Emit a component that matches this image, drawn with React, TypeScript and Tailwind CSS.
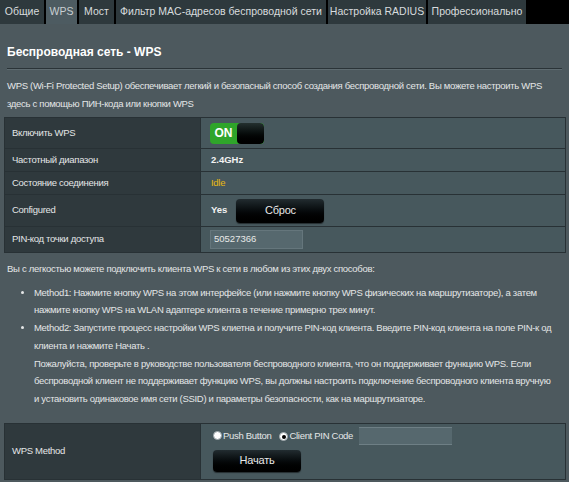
import React from 'react';

const tabs = [
  { label: 'Общие', w: 'w-[44px]' },
  { label: 'WPS', w: 'w-[31px]', active: true },
  { label: 'Мост', w: 'w-[35px]' },
  { label: 'Фильтр MAC-адресов беспроводной сети', w: 'w-[210px]' },
  { label: 'Настройка RADIUS', w: 'w-[98px]' },
  { label: 'Профессионально', w: 'w-[98px]' },
];

const BlackButton: React.FC<{ label: string; className?: string }> = ({ label, className }) => (
  <button
    className={`flex items-center justify-center rounded-[4px] bg-gradient-to-b from-[#222c30] to-[#000000] text-[11px] tracking-[-0.2px] text-[#e8e8e8] shadow-[0_1px_1px_rgba(0,0,0,0.5)] ${className ?? ''}`}
  >
    {label}
  </button>
);

const Radio: React.FC<{ checked?: boolean }> = ({ checked }) => (
  <span className="relative inline-flex h-[9px] w-[9px] items-center justify-center rounded-full border border-[#9aa4a8] bg-white">
    {checked && <span className="h-[4px] w-[4px] rounded-full bg-black" />}
  </span>
);

const Row: React.FC<{ label: string; h: string; children: React.ReactNode }> = ({ label, h, children }) => (
  <div className={`grid grid-cols-[196px_1fr] border-b border-[#283135] ${h}`}>
    <div className="flex items-center border-r border-[#283135] bg-[#2f393d] pl-[7px] text-[#e4e6e7]">{label}</div>
    <div className="flex items-center bg-[#47585d] pl-[9px]">{children}</div>
  </div>
);

export default function App() {
  return (
    <div
      className="h-[482px] w-[569px] overflow-hidden bg-[#4d595e] text-[9.5px] tracking-[-0.3px] text-[#e4e6e7]"
      style={{ fontFamily: '"Liberation Sans", Arial, sans-serif' }}
    >
      {/* tabs */}
      <div className="flex h-[24px] gap-[2px] bg-black tracking-normal">
        {tabs.map((t) => (
          <div
            key={t.label}
            className={`flex items-center justify-center whitespace-nowrap text-[10.5px] ${t.w} ${
              t.active ? 'bg-[#4d5b61] text-[#c9cfd2]' : 'bg-[#2e393d] text-[#d8dcde]'
            }`}
          >
            {t.label}
          </div>
        ))}
      </div>

      <div className="pl-[7px] pr-[5px] pt-[19px]">
        <div className="text-[12px] font-bold leading-[18px] tracking-normal text-white">Беспроводная сеть - WPS</div>
        <div className="mr-[2px] mt-[7px] border-t border-[#2a3337] shadow-[0_1px_0_#5e6b70]" />
        <p className="mt-[8px] leading-[18px]">
          WPS (Wi-Fi Protected Setup) обеспечивает легкий и безопасный способ создания беспроводной сети. Вы можете настроить WPS
          <br />
          здесь с помощью ПИН-кода или кнопки WPS
        </p>
      </div>

      <div className="mx-[4px] mt-[4px] w-[562px] border-x border-t border-[#283135]">
        <Row label="Включить WPS" h="h-[31px]">
          <div className="flex h-[21px] w-[54px] overflow-hidden rounded-[4px] bg-[#2fa52a] tracking-normal">
            <span className="flex w-[27px] items-center justify-center text-[12px] font-bold text-white">ON</span>
            <span className="flex-1 rounded-[4px] bg-gradient-to-b from-[#24302f] to-[#000000]" />
          </div>
        </Row>
        <Row label="Частотный диапазон" h="h-[23px]">
          <span className="pl-[1px] text-[9.5px] font-bold tracking-normal text-[#f2f2f2]">2.4GHz</span>
        </Row>
        <Row label="Состояние соединения" h="h-[23px]">
          <span className="pl-[1px] text-[#e8b810]">Idle</span>
        </Row>
        <Row label="Configured" h="h-[32px]">
          <span className="pl-[1px] text-[9.5px] font-bold tracking-normal text-[#f2f2f2]">Yes</span>
          <BlackButton label="Сброс" className="ml-[9px] h-[24px] w-[88px]" />
        </Row>
        <Row label="PIN-код точки доступа" h="h-[26px]">
          <div className="flex h-[19px] w-[93px] items-center border border-[#65767c] bg-[#56686e] pl-[3px] tracking-normal text-[#e8e8e8]">
            50527366
          </div>
        </Row>
      </div>

      <div className="pl-[7px] pr-[3px] pt-[7px] leading-[17.7px]">
        <p>Вы с легкостью можете подключить клиента WPS к сети в любом из этих двух способов:</p>
        <ul className="mt-[6px] list-disc pl-[27px]">
          <li>
            Method1: Нажмите кнопку WPS на этом интерфейсе (или нажмите кнопку WPS физических на маршрутизаторе), а затем
            <br />
            нажмите кнопку WPS на WLAN адаптере клиента в течение примерно трех минут.
          </li>
          <li>
            Method2: Запустите процесс настройки WPS клиетна и получите PIN-код клиента. Введите PIN-код клиента на поле PIN-к од
            <br />
            клиента и нажмите Начать .
            <br />
            Пожалуйста, проверьте в руководстве пользователя беспроводного клиента, что он поддерживает функцию WPS. Если
            <br />
            беспроводной клиент не поддерживает функцию WPS, вы должны настроить подключение беспроводного клиента вручную
            <br />
            и установить одинаковое имя сети (SSID) и параметры безопасности, как на маршрутизаторе.
          </li>
        </ul>
      </div>

      <div className="mx-[4px] mt-[15px] grid h-[57px] w-[562px] grid-cols-[196px_1fr] border border-[#283135]">
        <div className="flex items-center border-r border-[#283135] bg-[#2f393d] pl-[7px]">WPS Method</div>
        <div className="flex flex-col bg-[#47585d] pl-[12px] pt-[3px]">
          <div className="flex h-[18px] items-center">
            <Radio />
            <span className="ml-[1px]">Push Button</span>
            <span className="ml-[8px]"><Radio checked /></span>
            <span className="ml-[1px]">Client PIN Code</span>
            <div className="ml-[6px] h-[18px] w-[93px] border-y border-[#6e7f85] bg-[#56686e]" />
          </div>
          <BlackButton label="Начать" className="mt-[5px] h-[22px] w-[88px]" />
        </div>
      </div>
    </div>
  );
}
